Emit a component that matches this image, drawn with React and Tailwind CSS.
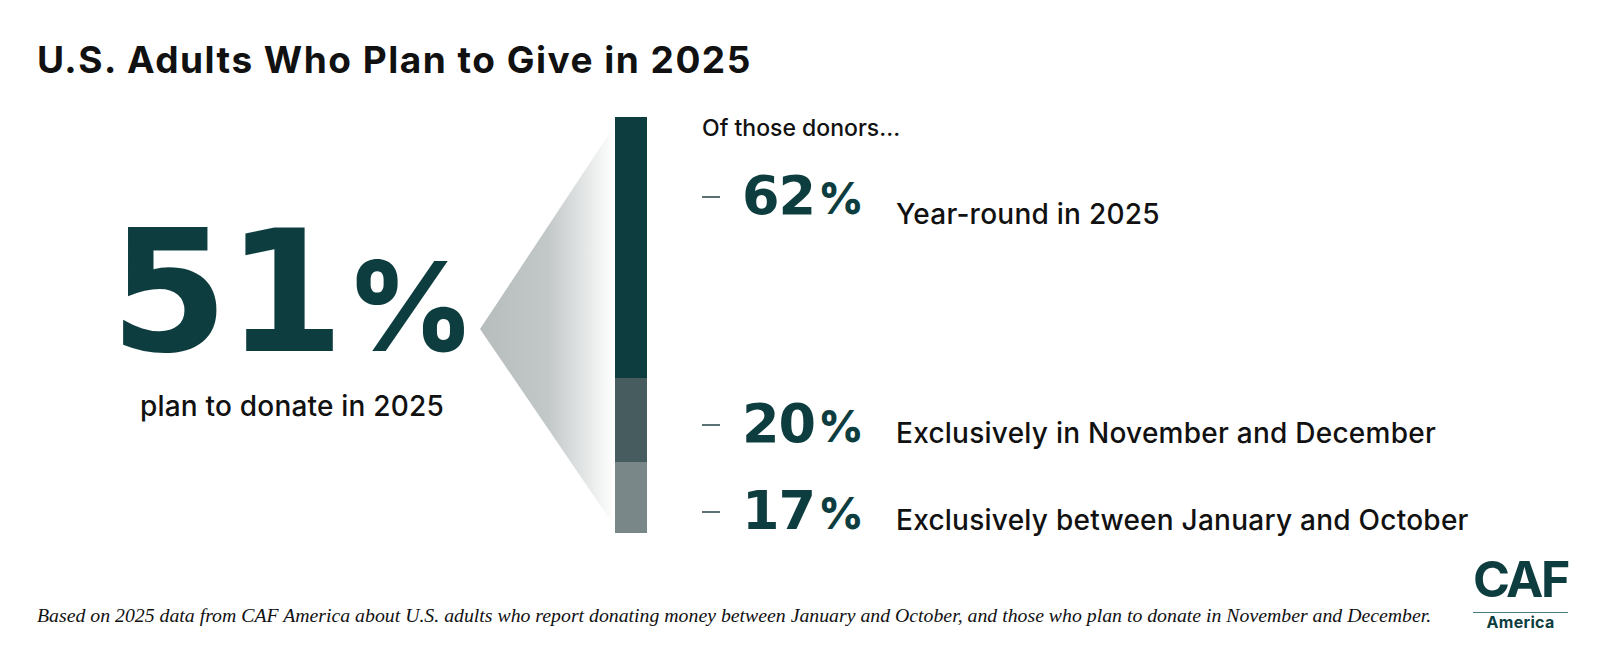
import React from "react";

const TEAL = "text-[#0e3d3f]";
const DIGITS = { fontFamily: "'DejaVu Sans', sans-serif" };

const rows = [
  { pct: "62", label: "Year-round in 2025", top: "mt-[29px]", labelTop: "mt-[31px]" },
  { pct: "20", label: "Exclusively in November and December", top: "mt-[169px]", labelTop: "mt-[22px]" },
  { pct: "17", label: "Exclusively between January and October", top: "mt-[33px]", labelTop: "mt-[22px]" },
];

function Stat({ pct, label, top, labelTop }) {
  return (
    <div className={"flex items-start " + top}>
      <div className="flex items-start w-[194px] shrink-0">
        <span className="w-[18px] h-[2px] bg-[#5b7173] mt-[27px] mr-[22px]"></span>
        <span className={"leading-none font-bold " + TEAL}>
          <span className="text-[54px] tracking-[-1px]" style={DIGITS}>{pct}</span>
          <span className="text-[44px] font-extrabold ml-[3px]">%</span>
        </span>
      </div>
      <span className={"text-[28px] leading-none font-medium tracking-[0.25px] text-[#111] " + labelTop}>
        {label}
      </span>
    </div>
  );
}

function Wedge() {
  return (
    <svg width="135" height="416" viewBox="0 0 135 416" className="shrink-0">
      <defs>
        <linearGradient id="wedgeFade" x1="0" y1="0" x2="1" y2="0">
          <stop offset="0" stopColor="#b7bdbd" />
          <stop offset="0.5" stopColor="#c2c7c7" />
          <stop offset="1" stopColor="#ffffff" />
        </linearGradient>
      </defs>
      <polygon points="0,212 135,8 135,410" fill="url(#wedgeFade)" />
    </svg>
  );
}

function CafLogo() {
  return (
    <div className="flex flex-col items-stretch w-[95px] text-[#0e3d3f]">
      <span className="text-[50px] leading-none font-bold tracking-[-2.5px] text-center pr-[2px]">
        CAF
      </span>
      <span className="h-[1px] bg-[#4b7a7c] mt-[8px]"></span>
      <span className="text-[16px] leading-none font-bold tracking-[0.3px] text-center mt-[1px]">
        America
      </span>
    </div>
  );
}

export default function App() {
  return (
    <div
      className="w-[1600px] h-[650px] bg-white overflow-hidden flex flex-col"
      style={{ fontFamily: "Inter, 'Noto Sans', sans-serif" }}
    >
      {/* title */}
      <h1 className="pl-[37px] pt-[41px] text-[37px] leading-none font-bold text-[#111] tracking-[1.5px]">
        U.S. Adults Who Plan to Give in 2025
      </h1>

      {/* main graphic */}
      <div className="flex mt-[39px] h-[416px]">
        <div className="w-[480px] pl-[104px] flex flex-col items-center pt-[90px] shrink-0">
          <div className={"leading-none font-bold whitespace-nowrap " + TEAL}>
            <span className="text-[170px] tracking-[-2px]" style={DIGITS}>51</span>
            <span className="text-[124px] font-extrabold ml-[4px]">%</span>
          </div>
          <div className="text-[28px] leading-none font-medium text-[#111] mt-[15px] tracking-[0.2px]">
            plan to donate in 2025
          </div>
        </div>

        <Wedge />

        <div className="w-[32px] flex flex-col shrink-0">
          <div className="h-[261px] bg-[#0e3d3f]"></div>
          <div className="h-[84px] bg-[#465c5e]"></div>
          <div className="h-[71px] bg-[#798789]"></div>
        </div>

        <div className="flex flex-col pl-[55px]">
          <div className="text-[23px] leading-none font-medium text-[#111]">Of those donors...</div>
          {rows.map((r) => (
            <Stat key={r.pct} {...r} />
          ))}
        </div>
      </div>

      {/* footer */}
      <div className="flex justify-between items-end pl-[37px] pr-[32px] mt-auto pb-[20px]">
        <p
          className="italic text-[19.8px] leading-none text-[#111] mb-[4px]"
          style={{ fontFamily: "'Liberation Serif', serif" }}
        >
          Based on 2025 data from CAF America about U.S. adults who report donating money between January and October, and those who plan to donate in November and December.
        </p>
        <CafLogo />
      </div>
    </div>
  );
}
